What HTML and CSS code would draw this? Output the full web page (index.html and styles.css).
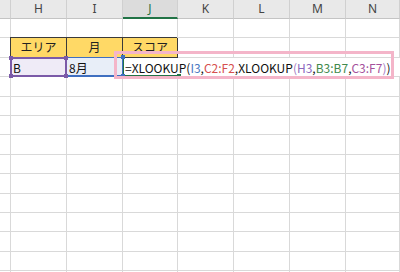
FILE: index.html
```html
<!DOCTYPE html>
<html lang="ja">
<head>
<meta charset="utf-8">
<link rel="stylesheet" href="styles.css">
</head>
<body>
<div class="sheet">
  <div class="grid">
    <div class="hd"></div><div class="hd">H</div><div class="hd">I</div><div class="hd sel">J</div><div class="hd">K</div><div class="hd">L</div><div class="hd">M</div><div class="hd">N</div>

    <div class="c"></div><div class="c"></div><div class="c"></div><div class="c"></div><div class="c"></div><div class="c"></div><div class="c"></div><div class="c"></div>

    <div class="c"></div><div class="c th">エリア</div><div class="c th">月</div><div class="c th">スコア</div><div class="c"></div><div class="c"></div><div class="c"></div><div class="c"></div>

    <div class="c"></div>
    <div class="c td ref-h">B<span class="frame purple"><i class="h tl"></i><i class="h tr"></i><i class="h bl"></i><i class="h br"></i></span></div>
    <div class="c td ref-i">8月<span class="frame blue"><i class="h tr"></i><i class="h br"></i></span></div>
    <div class="c td formula"><span class="active"><i class="h tl"></i><i class="h bl"></i><i class="fill"></i></span><span class="k">=XLOOKUP(</span><span class="r1">I3</span><span class="k">,</span><span class="r2">C2:F2</span><span class="k">,XLOOKUP</span><span class="p">(</span><span class="r3">H3</span><span class="k">,</span><span class="r4">B3:B7</span><span class="k">,</span><span class="r5">C3:F7</span><span class="p">)</span><span class="k">)</span></div>

    <div class="c"></div><div class="c"></div><div class="c"></div><div class="c"></div><div class="c"></div><div class="c"></div><div class="c"></div><div class="c"></div>
    <div class="c"></div><div class="c"></div><div class="c"></div><div class="c"></div><div class="c"></div><div class="c"></div><div class="c"></div><div class="c"></div>
    <div class="c"></div><div class="c"></div><div class="c"></div><div class="c"></div><div class="c"></div><div class="c"></div><div class="c"></div><div class="c"></div>
    <div class="c"></div><div class="c"></div><div class="c"></div><div class="c"></div><div class="c"></div><div class="c"></div><div class="c"></div><div class="c"></div>
    <div class="c"></div><div class="c"></div><div class="c"></div><div class="c"></div><div class="c"></div><div class="c"></div><div class="c"></div><div class="c"></div>
    <div class="c"></div><div class="c"></div><div class="c"></div><div class="c"></div><div class="c"></div><div class="c"></div><div class="c"></div><div class="c"></div>
    <div class="c"></div><div class="c"></div><div class="c"></div><div class="c"></div><div class="c"></div><div class="c"></div><div class="c"></div><div class="c"></div>
    <div class="c"></div><div class="c"></div><div class="c"></div><div class="c"></div><div class="c"></div><div class="c"></div><div class="c"></div><div class="c"></div>
    <div class="c"></div><div class="c"></div><div class="c"></div><div class="c"></div><div class="c"></div><div class="c"></div><div class="c"></div><div class="c"></div>
    <div class="c"></div><div class="c"></div><div class="c"></div><div class="c"></div><div class="c"></div><div class="c"></div><div class="c"></div><div class="c"></div>
    <div class="c"></div><div class="c"></div><div class="c"></div><div class="c"></div><div class="c"></div><div class="c"></div><div class="c"></div><div class="c"></div>
  </div>
  <div class="callout"></div>
</div>
</body>
</html>
```

FILE: styles.css
```css
html, body {
  margin: 0;
  padding: 0;
  background: #ffffff;
}

.sheet {
  position: relative;
  width: 400px;
  height: 272px;
  overflow: hidden;
  font-family: "Noto Sans CJK JP", "Noto Sans", sans-serif;
  color: #111;
}

.grid {
  display: grid;
  grid-template-columns: 11px 56px 56px 55px 56px 56px 56px 54px;
  grid-template-rows: 19px repeat(14, 19.4px);
}

.hd {
  box-sizing: border-box;
  background: #e9e9e9;
  border-right: 1px solid #d0d0d0;
  border-bottom: 1px solid #c4c4c4;
  font-family: "Noto Sans", sans-serif;
  font-size: 12px;
  line-height: 18px;
  text-align: center;
  color: #444;
}

.hd.sel {
  background: #dcdcdc;
  color: #217346;
  border-bottom: 2px solid #217346;
}

.c {
  box-sizing: border-box;
  border-right: 1px solid #d9d9d9;
  border-bottom: 1px solid #d9d9d9;
  position: relative;
}

.th {
  background: #ffd966;
  border-right-color: #3a3a3a;
  border-bottom-color: #3a3a3a;
  box-shadow: -1px -1px 0 #3a3a3a;
  font-size: 12px;
  line-height: 18px;
  text-align: center;
  color: #222;
}

.td {
  font-size: 12px;
  line-height: 19px;
  padding-left: 2px;
  white-space: nowrap;
}

.ref-h {
  background: #efebf7;
}

.ref-i {
  background: #e8eef8;
}

.frame {
  position: absolute;
  left: -1px;
  top: -1px;
  right: -1px;
  bottom: -1px;
  box-sizing: border-box;
}

.frame.purple {
  border: 2px solid #7b5aa8;
  z-index: 3;
}

.frame.blue {
  border: 1px solid #3f6fc0;
  border-bottom-width: 2px;
  z-index: 2;
}

.h {
  position: absolute;
  width: 4px;
  height: 4px;
  background: inherit;
}

.purple .h { background: #7b5aa8; }
.blue .h { background: #3f6fc0; }
.active .h { background: #3f6fc0; }

.h.tl { left: -3px; top: -3px; }
.h.tr { right: -3px; top: -3px; }
.h.bl { left: -3px; bottom: -3px; }
.h.br { right: -3px; bottom: -3px; }

.formula {
  grid-column: span 5;
  border-right: none;
  padding-left: 2px;
  z-index: 1;
}

.active {
  position: absolute;
  left: -1px;
  top: 0;
  width: 57px;
  bottom: -1px;
  box-sizing: border-box;
  border-left: 2px solid #217346;
  border-bottom: 2px solid #217346;
}

.fill {
  position: absolute;
  right: -2px;
  bottom: -3px;
  width: 4px;
  height: 4px;
  background: #217346;
}

.formula span { position: relative; }
.formula .active { position: absolute; }

.k { color: #111; }
.p { color: #a479c4; }
.r1 { color: #4a78c2; }
.r2 { color: #d6504f; }
.r3 { color: #8b68bd; }
.r4 { color: #3f8a4c; }
.r5 { color: #a5519c; }

.callout {
  position: absolute;
  left: 114px;
  top: 51px;
  width: 280px;
  height: 28px;
  box-sizing: border-box;
  border: 3px solid #f4b5c9;
  z-index: 5;
}
```
